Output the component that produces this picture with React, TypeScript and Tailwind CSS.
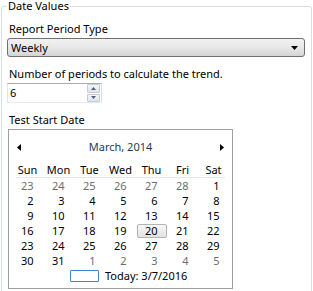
import React from 'react'

type Day = { d: number; cur: boolean }

const prev = (d: number): Day => ({ d, cur: false })
const cur = (d: number): Day => ({ d, cur: true })

const weeks: Day[][] = [
  [prev(23), prev(24), prev(25), prev(26), prev(27), prev(28), cur(1)],
  [2, 3, 4, 5, 6, 7, 8].map(cur),
  [9, 10, 11, 12, 13, 14, 15].map(cur),
  [16, 17, 18, 19, 20, 21, 22].map(cur),
  [23, 24, 25, 26, 27, 28, 29].map(cur),
  [cur(30), cur(31), prev(1), prev(2), prev(3), prev(4), prev(5)],
]

const dayNames = ['Sun', 'Mon', 'Tue', 'Wed', 'Thu', 'Fri', 'Sat']

function Calendar() {
  return (
    <div className="ml-[1px] mt-[1px] w-[225px] h-[160px] border border-[#a0a0a0] bg-white px-[3px]">
      {/* header */}
      <div className="h-[34px] flex items-center justify-between px-[5px]">
        <svg width="4" height="7" viewBox="0 0 4 7">
          <path d="M4 0 L0 3.5 L4 7 Z" fill="#000" />
        </svg>
        <span className="text-[#1e395b] leading-[12px]">March, 2014</span>
        <svg width="4" height="7" viewBox="0 0 4 7">
          <path d="M0 0 L4 3.5 L0 7 Z" fill="#000" />
        </svg>
      </div>

      {/* day names */}
      <div className="mx-[4px] h-[14px] border-b border-[#e6e6e6]">
        <div className="-mx-[4px] grid grid-cols-7 leading-[12px]">
          {dayNames.map((n) => (
            <div key={n} className="text-center">{n}</div>
          ))}
        </div>
      </div>

      {/* weeks */}
      <div className="grid grid-cols-7">
        {weeks.flat().map((day, i) => {
          const selected = day.cur && day.d === 20
          return (
            <div key={i} className="h-[15px] flex items-center justify-center">
              <div
                className={
                  selected
                    ? 'w-[30px] h-[14px] flex items-center justify-center rounded-[2px] border border-[#b4b4b4] bg-gradient-to-b from-[#f7f7f7] to-[#e2e2e2]'
                    : 'w-[30px] h-[14px] flex items-center justify-center'
                }
              >
                <span
                  className={
                    'w-[12px] leading-[13px] whitespace-nowrap flex justify-end ' +
                    (day.cur ? 'text-black' : 'text-[#6d6d6d]')
                  }
                >
                  {day.d}
                </span>
              </div>
            </div>
          )
        })}
      </div>

      {/* today */}
      <div className="h-[16px] flex items-center pl-[58px] gap-[6px]">
        <div className="w-[29px] h-[12px] border border-[#3a86d8] rounded-[1px]" />
        <span className="leading-[12px]">Today: 3/7/2016</span>
      </div>
    </div>
  )
}

export default function App() {
  return (
    <div className="w-[313px] h-[291px] overflow-hidden bg-white font-['Noto_Sans',sans-serif] text-[11px] text-black">
      <fieldset className="ml-[1px] w-[311px] h-[320px] border border-[#d5dfe5] rounded-[3px] px-[5px]">
        <legend className="px-[1px] leading-[12px]">Date Values</legend>

        <div className="ml-[2px] mt-[9px] leading-[16px]">Report Period Type</div>
        <div className="mt-[1px] w-[298px] h-[19px] flex items-center justify-between border border-[#707070] rounded-[3px] bg-gradient-to-b from-[#f2f2f2] via-[#e8e8e8] to-[#d4d4d4] pl-[3px] pr-[6px]">
          <span className="leading-[14px]">Weekly</span>
          <svg width="7" height="4" viewBox="0 0 7 4">
            <path d="M0 0 L7 0 L3.5 4 Z" fill="#000" />
          </svg>
        </div>

        <div className="ml-[2px] mt-[9px] leading-[16px]">Number of periods to calculate the trend.</div>
        <div className="mt-[1px] w-[95px] h-[20px] flex items-stretch border border-[#abadb3] border-l-[#e2e3ea] border-r-[#dbdfe6] border-b-[#e3e9ef] bg-white">
          <span className="flex-1 pl-[2px] leading-[18px]">6</span>
          <div className="w-[13px] flex flex-col gap-[1px] mr-[1px]">
            <div className="flex-1 flex items-center justify-center border border-[#c6cad2] rounded-[1px] bg-gradient-to-b from-[#f5f6f8] to-[#dfe3ea]">
              <svg width="5" height="3" viewBox="0 0 5 3">
                <path d="M0 3 L2.5 0 L5 3 Z" fill="#4c607e" />
              </svg>
            </div>
            <div className="flex-1 flex items-center justify-center border border-[#c6cad2] rounded-[1px] bg-gradient-to-b from-[#f5f6f8] to-[#dfe3ea]">
              <svg width="5" height="3" viewBox="0 0 5 3">
                <path d="M0 0 L5 0 L2.5 3 Z" fill="#4c607e" />
              </svg>
            </div>
          </div>
        </div>

        <div className="ml-[2px] mt-[9px] leading-[16px]">Test Start Date</div>
        <Calendar />
      </fieldset>
    </div>
  )
}
